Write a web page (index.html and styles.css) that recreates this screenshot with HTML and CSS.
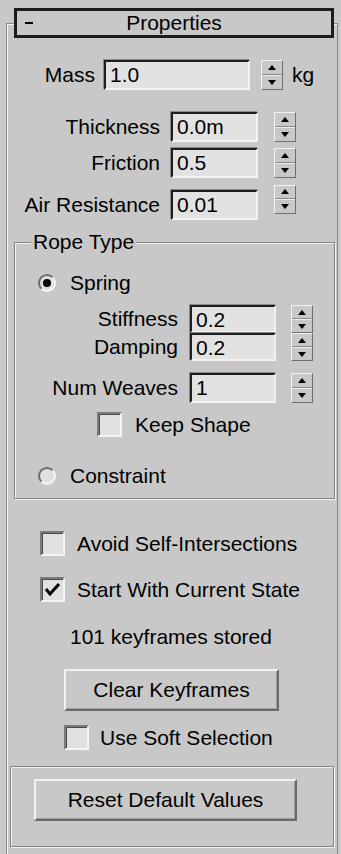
FILE: index.html
```html
<!DOCTYPE html>
<html lang="en">
<head>
  <meta charset="UTF-8">
  <meta name="viewport" content="width=device-width, initial-scale=1.0">
  <title>Properties</title>
  <link rel="stylesheet" href="styles.css">
</head>
<body>
  <div class="frame">
    <div class="rollout-head">
      <span class="minus"></span>
      <span class="title">Properties</span>
    </div>

    <div class="row row-mass">
      <span class="lbl">Mass</span>
      <span class="num">1.0</span>
      <span class="spin"><i class="up"></i><i class="down"></i></span>
      <span class="unit">kg</span>
    </div>

    <div class="row row-phys row-thick">
      <span class="lbl">Thickness</span>
      <span class="num">0.0m</span>
      <span class="spin"><i class="up"></i><i class="down"></i></span>
    </div>
    <div class="row row-phys row-friction">
      <span class="lbl">Friction</span>
      <span class="num">0.5</span>
      <span class="spin"><i class="up"></i><i class="down"></i></span>
    </div>
    <div class="row row-phys row-air">
      <span class="lbl">Air Resistance</span>
      <span class="num">0.01</span>
      <span class="spin spin-high"><i class="up"></i><i class="down"></i></span>
    </div>

    <fieldset class="group rope-group">
      <legend>Rope Type</legend>
      <div class="radio-row spring-row">
        <span class="radio radio--on"></span>
        <span class="opt-text">Spring</span>
      </div>
      <div class="row row-rope row-stiff">
        <span class="lbl">Stiffness</span>
        <span class="num">0.2</span>
        <span class="spin"><i class="up"></i><i class="down"></i></span>
      </div>
      <div class="row row-rope row-damp">
        <span class="lbl">Damping</span>
        <span class="num">0.2</span>
        <span class="spin"><i class="up"></i><i class="down"></i></span>
      </div>
      <div class="row row-rope row-weaves">
        <span class="lbl">Num Weaves</span>
        <span class="num">1</span>
        <span class="spin"><i class="up"></i><i class="down"></i></span>
      </div>
      <div class="check-row keep-row">
        <span class="check"></span>
        <span class="opt-text">Keep Shape</span>
      </div>
      <div class="radio-row constraint-row">
        <span class="radio"></span>
        <span class="opt-text">Constraint</span>
      </div>
    </fieldset>

    <div class="check-row avoid-row">
      <span class="check"></span>
      <span class="opt-text">Avoid Self-Intersections</span>
    </div>
    <div class="check-row start-row">
      <span class="check">
        <svg width="21" height="21" viewBox="0 0 21 21"><polyline points="4,10 8,15 17,5" fill="none" stroke="#000" stroke-width="3"/></svg>
      </span>
      <span class="opt-text">Start With Current State</span>
    </div>

    <div class="status">101 keyframes stored</div>

    <div class="btn btn-clear">Clear Keyframes</div>

    <div class="check-row soft-row">
      <span class="check"></span>
      <span class="opt-text">Use Soft Selection</span>
    </div>

    <div class="group reset-group">
      <div class="btn btn-reset">Reset Default Values</div>
    </div>
  </div>
</body>
</html>
```

FILE: styles.css
```css
body {
  margin: 0;
  height: 854px;
  overflow: hidden;
  background: #c8c8c8;
  font-family: "Liberation Sans", Arial, sans-serif;
  font-size: 21px;
  line-height: 24px;
  color: #000;
}
.frame {
  margin: 23px 3px 0 6px;
  height: 831px;
  border: 1px solid #8a8a8a;
  border-bottom: none;
  box-shadow: inset 1px 1px 0 #f2f2f2;
}
.rollout-head {
  margin: -16px 3px 0 7px;
  height: 24px;
  border: 3px solid #1c1c1c;
  background: #c8c8c8;
  display: grid;
  grid-template-columns: 1fr auto 1fr;
  align-items: center;
}
.minus {
  width: 8px;
  height: 2px;
  margin-left: 8px;
  background: #000;
}

/* spinner rows */
.row {
  display: flex;
  align-items: center;
  height: 30px;
}
.lbl {
  flex: none;
  text-align: right;
  white-space: nowrap;
}
.num {
  flex: none;
  box-sizing: border-box;
  height: 100%;
  padding-left: 4px;
  border: 2px solid;
  border-color: #1e1e1e #f2f2f2 #f2f2f2 #1e1e1e;
  background: #e2e2e2;
  box-shadow: -1px -1px 0 #8a8a8a;
  line-height: 26px;
}
.spin {
  flex: none;
  box-sizing: border-box;
  width: 22px;
  height: 100%;
  display: flex;
  flex-direction: column;
  border: 1px solid;
  border-color: #f2f2f2 #6e6e6e #6e6e6e #f2f2f2;
}
.spin i {
  flex: 1;
  display: flex;
  align-items: center;
  justify-content: center;
}
.spin i.up {
  border-bottom: 1px solid #8a8a8a;
}
.spin i.down {
  border-top: 1px solid #ececec;
}
.spin i.up::after {
  content: "";
  border: 4px solid transparent;
  border-top: none;
  border-bottom: 5px solid #000;
}
.spin i.down::after {
  content: "";
  border: 4px solid transparent;
  border-bottom: none;
  border-top: 5px solid #000;
}

.row-mass {
  margin-top: 22px;
}
.row-mass .lbl { width: 88px; }
.row-mass .num { width: 146px; margin-left: 9px; }
.row-mass .spin { margin-left: 11px; }
.unit { margin-left: 9px; }

.row-phys .lbl { width: 153px; }
.row-phys .num { width: 87px; margin-left: 11px; }
.row-phys .spin { margin-left: 16px; }
.row-thick { margin-top: 22px; }
.row-friction { margin-top: 6px; }
.row-air { margin-top: 12px; }
.spin-high {
  height: 29px;
  margin-bottom: 12px;
}

/* group boxes */
.group {
  border: 1px solid #848484;
  box-shadow: inset 1px 1px 0 #f2f2f2, 1px 1px 0 #f2f2f2;
}
.rope-group {
  margin: 10px 2px 0 7px;
  padding: 0 0 10px 0;
}
.rope-group legend {
  margin-left: 16px;
  padding: 0 2px;
  background: #c8c8c8;
  line-height: 24px;
}
.row-rope {
  height: 28px;
}
.row-rope .lbl { width: 163px; }
.row-rope .num { width: 86px; margin-left: 12px; }
.row-rope .spin { margin-left: 15px; }
.row-stiff { margin-top: 10px; }
.row-weaves { margin-top: 12px; height: 30px; }

.radio-row {
  display: flex;
  align-items: center;
  height: 24px;
  padding-left: 23px;
}
.radio {
  box-sizing: border-box;
  width: 18px;
  height: 18px;
  border: 2px solid;
  border-color: #6e6e6e #f4f4f4 #f4f4f4 #6e6e6e;
  border-radius: 50%;
  background: #e0e0e0;
  display: flex;
  align-items: center;
  justify-content: center;
}
.radio--on::after {
  content: "";
  width: 8px;
  height: 8px;
  border-radius: 50%;
  background: #000;
}
.radio-row .opt-text { margin-left: 14px; }
.spring-row { margin-top: 17px; }
.constraint-row { margin-top: 27px; }

.check-row {
  display: flex;
  align-items: center;
  height: 25px;
}
.check {
  box-sizing: border-box;
  width: 25px;
  height: 25px;
  border: 2px solid;
  border-color: #7a7a7a #f4f4f4 #f4f4f4 #7a7a7a;
  box-shadow: inset 1px 1px 0 #4a4a4a;
  background: #e0e0e0;
}
.check svg { display: block; }
.keep-row { margin-top: 9px; padding-left: 82px; }
.keep-row .opt-text { margin-left: 13px; }
.avoid-row { margin-top: 32px; padding-left: 33px; }
.start-row { margin-top: 21px; padding-left: 33px; }
.avoid-row .opt-text,
.start-row .opt-text { margin-left: 12px; }

.status {
  margin-top: 23px;
  padding-left: 63px;
}

/* push buttons */
.btn {
  box-sizing: border-box;
  height: 42px;
  border: 2px solid;
  border-color: #f2f2f2 #6a6a6a #6a6a6a #f2f2f2;
  box-shadow: inset -1px -1px 0 #9c9c9c;
  text-align: center;
  line-height: 37px;
}
.btn-clear {
  width: 215px;
  margin: 20px 0 0 57px;
}
.soft-row { margin-top: 14px; padding-left: 57px; }
.soft-row .opt-text { margin-left: 11px; }

.reset-group {
  height: 79px;
  margin: 16px 3px 0 3px;
}
.btn-reset {
  width: 263px;
  margin: 12px 0 0 23px;
}
```
